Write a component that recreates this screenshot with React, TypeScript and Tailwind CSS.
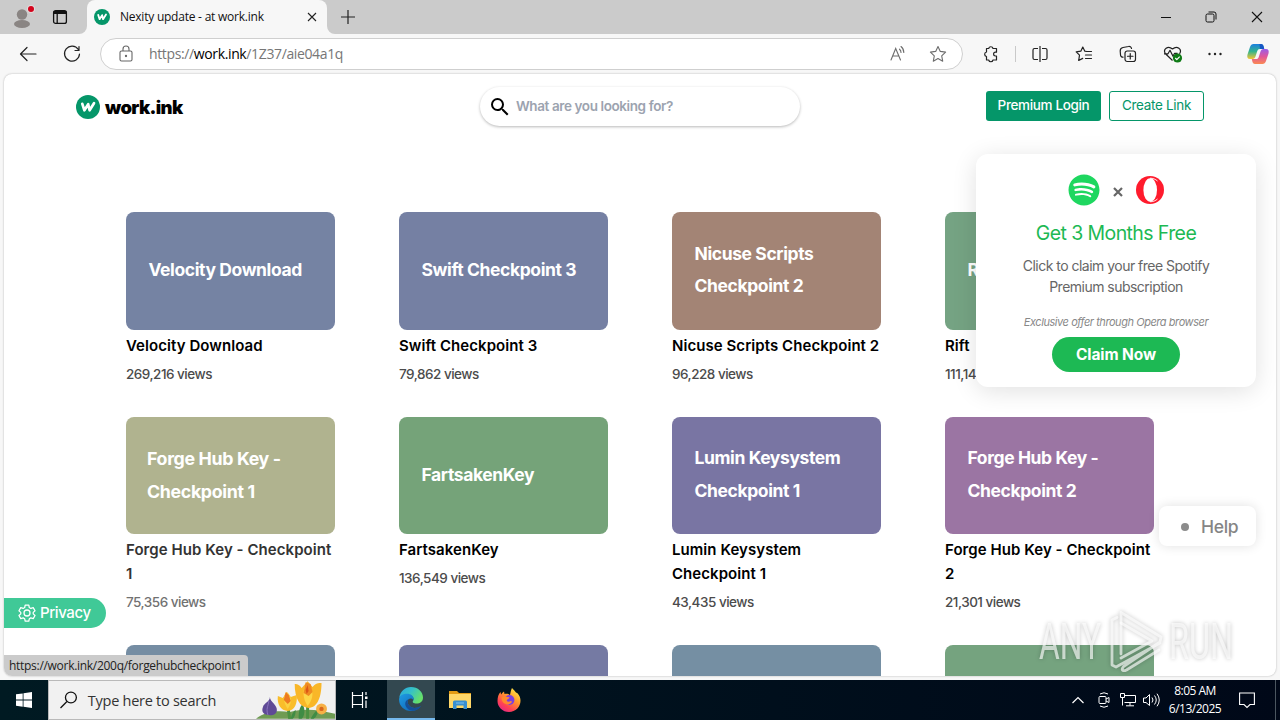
import React from "react";
import { FaSpotify } from "react-icons/fa";
import { MdSearch } from "react-icons/md";

type LinkCard = { lines: string[]; title: string; views: string; box: string; dim?: boolean };

const cards: LinkCard[] = [
  { lines: ["Velocity Download"], title: "Velocity Download", views: "269,216 views", box: "bg-[#7583a3]" },
  { lines: ["Swift Checkpoint 3"], title: "Swift Checkpoint 3", views: "79,862 views", box: "bg-[#7580a3]" },
  { lines: ["Nicuse Scripts", "Checkpoint 2"], title: "Nicuse Scripts Checkpoint 2", views: "96,228 views", box: "bg-[#a38475]" },
  { lines: ["Rift"], title: "Rift", views: "111,14", box: "bg-[#75a383]" },
  { lines: ["Forge Hub Key -", "Checkpoint 1"], title: "Forge Hub Key - Checkpoint 1", views: "75,356 views", box: "bg-[#b0b38f]", dim: true },
  { lines: ["FartsakenKey"], title: "FartsakenKey", views: "136,549 views", box: "bg-[#75a379]" },
  { lines: ["Lumin Keysystem", "Checkpoint 1"], title: "Lumin Keysystem Checkpoint 1", views: "43,435 views", box: "bg-[#7975a3]" },
  { lines: ["Forge Hub Key -", "Checkpoint 2"], title: "Forge Hub Key - Checkpoint 2", views: "21,301 views", box: "bg-[#9b75a3]" },
  { lines: [], title: "", views: "", box: "bg-[#758da3]" },
  { lines: [], title: "", views: "", box: "bg-[#757aa3]" },
  { lines: [], title: "", views: "", box: "bg-[#758fa3]" },
  { lines: [], title: "", views: "", box: "bg-[#75a37f]" },
];

function WorkMark({ className }: { className: string }) {
  return (
    <svg viewBox="0 0 24 24" className={className}>
      <circle cx="12" cy="12" r="12" fill="#059669" />
      <path d="M6.3 8.8 8.4 15.3 12.2 9.2 13.6 15.3 18 8.2" fill="none" stroke="#fff" strokeWidth="2.7" strokeLinejoin="round" strokeLinecap="round" />
    </svg>
  );
}

function TabStrip() {
  return (
    <div className="flex h-[34px] items-stretch bg-[#f7f7f7]">
      <div className="flex w-[87px] items-center rounded-br-lg bg-[#cbcbcb] pl-[12px]">
        <svg width="24" height="26" viewBox="0 0 24 26">
          <circle cx="10" cy="10.5" r="5.2" fill="#8a8583" />
          <ellipse cx="10" cy="20" rx="8" ry="4" fill="#8a8583" />
          <circle cx="19" cy="5" r="4" fill="#e3dada" />
          <circle cx="19" cy="5" r="3" fill="#d3041c" />
        </svg>
        <svg width="16" height="16" viewBox="0 0 16 16" className="ml-[16px]">
          <rect x="1.6" y="1.6" width="12.8" height="12.8" rx="2" fill="none" stroke="#111" strokeWidth="1.3" />
          <path d="M1.6 2h12.8v3H1.6z" fill="#111" />
          <path d="M5.2 4v10.400" stroke="#111" strokeWidth="1.3" />
        </svg>
      </div>
      <div className="w-[240px] bg-[#cbcbcb]">
        <div className="flex h-[34px] items-center rounded-t-lg bg-[#f7f7f7] pl-[7px]">
          <WorkMark className="size-4" />
          <span className="ml-[10px] w-[187px] whitespace-nowrap text-[12px] tracking-[-0.230px] text-[#111]">Nexity update - at work.ink</span>
          <svg width="10" height="10" viewBox="0 0 10 10"><path d="M1 1l8 8M9 1l-8 8" stroke="#222" strokeWidth="1.1" /></svg>
        </div>
      </div>
      <div className="flex flex-1 items-center rounded-bl-lg bg-[#cbcbcb] pl-[14px]">
        <svg width="14" height="14" viewBox="0 0 14 14"><path d="M7 0v14M0 7h14" stroke="#222" strokeWidth="1.2" /></svg>
      </div>
      <div className="flex items-center gap-[34px] bg-[#cbcbcb] pr-[17px]">
        <svg width="10" height="12" viewBox="0 0 10 12"><path d="M0 6.5h10" stroke="#111" /></svg>
        <svg width="12" height="12" viewBox="0 0 12 12" fill="none" stroke="#111">
          <rect x="1" y="3" width="8" height="8" rx="1.5" />
          <path d="M3.5 1H9a2 2 0 0 1 2 2v5.5" />
        </svg>
        <svg width="12" height="12" viewBox="0 0 12 12"><path d="M1 1l10 10M11 1 1 11" stroke="#111" strokeWidth="1.1" /></svg>
      </div>
    </div>
  );
}

function Toolbar() {
  return (
    <div className="flex h-[39px] items-center bg-[#f7f7f7] pl-[18px]">
      <svg width="20" height="20" viewBox="0 0 20 20" fill="none" stroke="#222" strokeWidth="1.2" strokeLinecap="round" strokeLinejoin="round">
        <path d="M18 10H2.500M9 3.500 2.500 10 9 16.500" />
      </svg>
      <svg width="20" height="20" viewBox="0 0 20 20" fill="none" stroke="#222" strokeWidth="1.2" strokeLinecap="round" strokeLinejoin="round" className="ml-[24px]">
        <path d="M16.300 5.500A7.500 7.500 0 1 0 17.500 10M17 2.500v4h-4" />
      </svg>
      <div className="ml-[18px] flex h-[32px] w-[863px] items-center rounded-full border border-[#cfcfcf] bg-white pl-[17px] pr-[15px]">
        <svg width="16" height="18" viewBox="0 0 16 18" fill="none" stroke="#666" strokeWidth="1.100">
          <rect x="2" y="6" width="12" height="10" rx="1.500" />
          <path d="M5 6V4a3 3 0 0 1 6 0v2" />
          <circle cx="8" cy="11" r=".6" fill="#666" />
        </svg>
        <span className="ml-[15px] flex-1 text-[14px] tracking-[-0.370px] text-[#767676]">https://<span className="text-black">work.ink</span>/1Z37/aie04a1q</span>
        <svg width="18" height="18" viewBox="0 0 18 18" fill="none" stroke="#6d6d6d" strokeWidth="1.100" strokeLinecap="round">
          <path d="M2 15 6.700 3.500 11.500 15M3.700 11h6" />
          <path d="M10.500 4.200c1 .8 1.500 2 1.500 3.300M12 1.500c1.800 1.400 2.800 3.500 2.800 6" />
        </svg>
        <svg width="18" height="18" viewBox="0 0 18 18" fill="none" stroke="#6d6d6d" strokeWidth="1.100" strokeLinejoin="round" className="ml-[22px]">
          <path d="M9 1.500l2.300 4.900 5.300.7-3.900 3.700 1 5.400L9 13.600l-4.700 2.600 1-5.400L1.400 7.100l5.300-.7z" />
        </svg>
      </div>
      <div className="ml-[19px] flex items-center text-[#222]">
        <svg width="18" height="18" viewBox="0 0 18 18" fill="none" stroke="currentColor" strokeWidth="1.200" strokeLinejoin="round">
          <path d="M4.500 3.500h2.200a2.200 2.200 0 0 1 4.300 0h3.500v3.700h-1a1.900 1.900 0 0 0 0 3.800h1v4H11a2.200 2.200 0 0 1-4.300 0H4.500v-3.500a2.300 2.300 0 0 1 0-4.500z" />
        </svg>
        <span className="ml-[15px] h-4 w-px bg-[#c9c9c9]" />
        <svg width="18" height="18" viewBox="0 0 18 18" fill="none" stroke="currentColor" strokeWidth="1.200" className="ml-[15px]">
          <path d="M7 3.500H3.500A1.500 1.500 0 0 0 2 5v8a1.500 1.500 0 0 0 1.500 1.500H7M11 3.500h3.500A1.500 1.500 0 0 1 16 5v8a1.500 1.500 0 0 1-1.500 1.500H11M9 1v16" />
        </svg>
        <svg width="18" height="18" viewBox="0 0 18 18" fill="none" stroke="currentColor" strokeWidth="1.200" strokeLinejoin="round" strokeLinecap="round" className="ml-[26px]">
          <path d="M11.700 6.500 9.800 6.200 7.800 2 5.800 6.200 1.200 6.900l3.300 3.300-.8 5.300 4-2.100M11.700 6.500h4.800M10.500 10h6M10.500 13.500h6" />
        </svg>
        <svg width="18" height="18" viewBox="0 0 18 18" fill="none" stroke="currentColor" strokeWidth="1.200" strokeLinecap="round" className="ml-[26px]">
          <rect x="6" y="6" width="10.500" height="10.500" rx="2.200" />
          <path d="M11.250 8.500v5.500M8.500 11.250H14M4 12.200A2.500 2.500 0 0 1 1.500 9.700L1.200 6A3.500 3.500 0 0 1 4 2.500L9.500 1.500a2.500 2.500 0 0 1 3 2" />
        </svg>
        <svg width="21" height="20" viewBox="0 0 21 20" fill="none" stroke="currentColor" strokeWidth="1.200" strokeLinejoin="round" className="ml-[26px]">
          <path d="M9.500 16.500 2.500 9.800C-.5 5.500 4.800 1 9.500 5c4.700-4 10 .5 7 4.800M1 9.800h4l2-3.500 3 6 1.600-3h3" />
          <circle cx="14.500" cy="14" r="4.600" fill="#0f7b16" stroke="none" />
          <path d="m12.300 14 1.500 1.600 2.900-3" stroke="#fff" />
        </svg>
        <svg width="16" height="4" viewBox="0 0 16 4" className="ml-[23px]" fill="currentColor">
          <circle cx="2.500" cy="2" r="1.200" /><circle cx="8" cy="2" r="1.200" /><circle cx="13.500" cy="2" r="1.200" />
        </svg>
        <svg width="24" height="22" viewBox="0 0 24 22" className="ml-[23px]">
          <defs>
            <linearGradient id="cpA" x1="0" y1="0" x2="0" y2="1"><stop offset="0" stopColor="#1b7fe0" /><stop offset=".5" stopColor="#34b58c" /><stop offset="1" stopColor="#f6c532" /></linearGradient>
            <linearGradient id="cpB" x1="0" y1="0" x2="0" y2="1"><stop offset="0" stopColor="#9a5ce8" /><stop offset=".5" stopColor="#e0569b" /><stop offset="1" stopColor="#fb8a52" /></linearGradient>
          </defs>
          <path d="M7.500 1H15c1.600 0 2.200 1 2.700 2.800L18.200 6H14c-1.600 0-2.300.8-2.900 2.600L9.500 13.500C9 15 8.200 16 6.500 16H4C1.500 16 .8 14 1.500 11.500L4 4C4.700 2 5.800 1 7.500 1z" fill="url(#cpA)" />
          <path d="M13.500 1H15c1.600 0 2.200 1 2.700 2.800L18.200 6H14z" fill="#1657c4" />
          <path d="M16.500 21H9c-1.600 0-2.200-1-2.700-2.800L5.800 16H10c1.600 0 2.300-.8 2.900-2.600L14.500 8.500C15 7 15.800 6 17.500 6H20c2.500 0 3.200 2 2.500 4.500L20 18c-.7 2-1.800 3-3.500 3z" fill="url(#cpB)" />
        </svg>
      </div>
    </div>
  );
}

function SiteHeader() {
  return (
    <header className="flex items-start pl-[72px] pr-[72px] pt-[13px]">
      <div className="flex w-[404px] items-center gap-[5px] pt-[7px]">
        <WorkMark className="size-6" />
        <span className="pt-[1px] text-[18.500px] font-black leading-6 tracking-[-0.650px] text-black">work.ink</span>
      </div>
      <div className="flex h-[39px] w-[320px] items-center rounded-full bg-white pl-[8px] shadow-[0_1px_3px_rgba(0,0,0,0.28)]">
        <MdSearch className="size-6 text-black" />
        <span className="ml-[4px] text-[13.500px] font-semibold tracking-[-0.400px] text-[#9ca3af]">What are you looking for?</span>
      </div>
      <div className="ml-auto flex gap-[8px] pt-[4px]">
        <button className="h-[30px] w-[115px] rounded-[3px] bg-[#059669] pb-[2px] text-[13.500px] font-medium tracking-[-0.350px] text-white">Premium Login</button>
        <button className="h-[30px] w-[95px] rounded-[3px] border border-[#059669] pb-[2px] text-[13.500px] tracking-[-0.300px] text-[#059669]">Create Link</button>
      </div>
    </header>
  );
}

function Card({ card }: { card: LinkCard }) {
  return (
    <article>
      <div className={"flex h-[117.5px] flex-col justify-center rounded-[8px] pb-[1px] font-bold text-white " + (card.dim ? "pl-[21px] text-[17.800px] leading-[33px] tracking-[-0.350px] " : "pl-[22.500px] text-[17.500px] leading-[32.500px] tracking-[-0.400px] ") + card.box}>
        {card.lines.map((line) => (
          <span key={line} className="whitespace-nowrap">{line}</span>
        ))}
      </div>
      <h3 className={"mt-[4px] text-[15px] font-semibold leading-6 tracking-[0.060px] " + (card.dim ? "text-[#333]" : "text-black")}>{card.title}</h3>
      <p className={"mt-[6px] text-[13.500px] font-medium leading-5 tracking-[-0.500px] " + (card.dim ? "text-[#717171]" : "text-[#4b4b4b]")}>{card.views}</p>
    </article>
  );
}

function Promo() {
  return (
    <aside className="absolute left-[972px] top-[80px] flex h-[233px] w-[280px] flex-col items-center rounded-[12px] bg-white pt-[20px] shadow-[0_4px_24px_rgba(0,0,0,0.12)]">
      <div className="flex h-8 items-center">
        <FaSpotify className="size-[32px] text-[#1ed760]" />
        <svg width="10" height="10" viewBox="0 0 10 10" className="ml-[13px] mt-[3px]"><path d="M1 1l8 8M9 1 1 9" stroke="#666" strokeWidth="2.200" /></svg>
        <svg width="28" height="28" viewBox="0 0 28 28" className="ml-[13px]">
          <circle cx="14" cy="14" r="14" fill="#ff1b2d" />
          <ellipse cx="14.200" cy="14" rx="6.800" ry="11.800" fill="#fff" />
          <path d="M14 2.200c3 0 5.500 1 7.500 2.800" fill="none" stroke="#fff" strokeWidth=".9" />
          <path d="M14 25.800c3 0 5.500-1 7.500-2.800" fill="none" stroke="#fff" strokeWidth=".9" />
        </svg>
      </div>
      <h2 className="mt-[13px] text-[19.500px] leading-7 tracking-[-0.600px] text-[#1db954]">Get 3 Months Free</h2>
      <p className="mt-[8px] w-[220px] text-center text-[14px] leading-[21px] tracking-[-0.520px] text-[#666]">Click to claim your free Spotify Premium subscription</p>
      <p className="mt-[17px] whitespace-nowrap text-[11px] italic leading-4 tracking-[-0.440px] text-[#888]">Exclusive offer through Opera browser</p>
      <button className="mt-[7px] h-[35px] w-[128px] rounded-full bg-[#1db954] text-[15.500px] font-bold tracking-[-0.100px] text-white">Claim Now</button>
    </aside>
  );
}

function Watermark() {
  return (
    <svg width="208" height="70" viewBox="0 0 208 70" className="absolute left-[1032px] top-[534px] drop-shadow-[0_0_2px_rgba(0,0,0,0.35)]" fill="none">
      <g fill="#fff" fillOpacity=".65" fontFamily="Roboto, sans-serif" fontSize="50" fontWeight="400">
        <text x="3" y="51" textLength="62" lengthAdjust="spacingAndGlyphs">ANY</text>
        <text x="133" y="51" textLength="64" lengthAdjust="spacingAndGlyphs">RUN</text>
      </g>
      <g stroke="#fff" strokeOpacity=".65" strokeWidth="2.800" strokeLinejoin="round" strokeLinecap="round">
        <path d="M81 9.500 76 12V57l4 2 44-24M85 46V4.500l40 24.500-1 5L87.500 58.500c-3 4 0 5 3 3.500L123 42" />
        <path d="M85 15 116 33 85 50" />
      </g>
    </svg>
  );
}

function SitePage() {
  return (
    <main className="relative mx-[4px] mt-px h-[602px] overflow-hidden rounded-[8px] bg-white font-['Inter',sans-serif] shadow-[0_0_2px_rgba(0,0,0,0.3)]">
      <SiteHeader />
      <div className="ml-[122px] mt-[86px] grid w-[1028px] grid-cols-[repeat(4,209px)] gap-x-[64px] gap-y-[33px]">
        {cards.map((card, i) => (
          <Card key={i} card={card} />
        ))}
      </div>
      <Promo />
      <div className="absolute left-[1155px] top-[432px] flex h-[40px] w-[97px] items-center rounded-[8px] bg-white pl-[22px] shadow-[0_0_12px_rgba(0,0,0,0.12)]">
        <span className="mt-[2px] size-2 rounded-full bg-[#8c8c8c]" />
        <span className="ml-[12px] pt-[2px] text-[17.500px] font-medium tracking-[-0.300px] text-[#858585]">Help</span>
      </div>
      <div className="absolute left-0 top-[524px] flex h-[30px] w-[102px] items-center rounded-r-full bg-[#40c997] pl-[14px] text-white">
        <svg width="18" height="18" viewBox="0 0 24 24" fill="none" stroke="currentColor" strokeWidth="1.700" strokeLinejoin="round">
          <path d="M9.600 1.500h4.800l.7 3.200 2 1.200 3.200-1 2.400 4.100-2.400 2.200v2l2.400 2.200-2.400 4.100-3.200-1-2 1.200-.7 3.200H9.600l-.7-3.200-2-1.200-3.200 1-2.400-4.100 2.400-2.200v-2L1.300 9l2.400-4.100 3.200 1 2-1.200z" />
          <circle cx="12" cy="12" r="4" />
        </svg>
        <span className="ml-[4px] text-[15px] font-medium tracking-[-0.400px]">Privacy</span>
      </div>
      <div className="absolute bottom-0 left-0 h-[21px] w-[244px] rounded-tr-[4px] bg-[#cbcbcb] pl-[5px] font-['Open_Sans',sans-serif] text-[12px] leading-[21px] tracking-[-0.290px] text-[#222]">https://work.ink/200q/forgehubcheckpoint1</div>
      <Watermark />
    </main>
  );
}

function Flowers() {
  return (
    <svg width="80" height="39" viewBox="0 0 80 39">
      <path d="M0 39c8-7 20-9 34-7 16-4 30-2 46 2v5z" fill="#6f9b53" />
      <path d="M14 17c0 5 8 8 7 14-1 4-5 5-8 4-5 0-8-3-6-8 1-4 7-5 7-10z" fill="#5f4a96" />
      <path d="M13 21c-1 6-3 8-1 14" stroke="#8a74bd" fill="none" />
      <path d="M34 39l-2-13M52 39V22" stroke="#4c9141" strokeWidth="3" />
      <path d="M43 39c0-8 1-12 4-15 3 6 2 12-1 15zM55 39c4-7 6-9 8-10-1 5-2 8-5 10zM35 39c1-5 3-8 5-9 0 4-1 7-3 9z" fill="#3f8c45" />
      <path d="M22 16l5 2 4-6 4 5 6-2c1 8-2 16-9 16s-11-7-10-15z" fill="#f9bd2a" />
      <path d="M31 12c-4 3-4 10 1 17 5-7 4-13-1-17z" fill="#fbd142" />
      <path d="M30 12l3 3 2 6-3 3-4-4z" fill="#ed7a22" />
      <path d="M39 4c3-1 6 2 7 4l6-7 5 6c3-4 6-4 9-4 0 14-4 25-13 25S39 18 39 4z" fill="#f9b728" />
      <path d="M52 3c-6 6-5 16 0 23 6-7 7-16 0-23z" fill="#fdd647" />
      <path d="M50 2l5 2 2 8-4 4-5-3z" fill="#ef8a22" />
      <path d="M52 5l1 6-2 3-1-4z" fill="#db5716" />
      <circle cx="66" cy="29" r="5.500" fill="#f6b046" /><circle cx="66" cy="29" r="2.200" fill="#d9661c" />
    </svg>
  );
}

function EdgeLogo() {
  return (
    <svg width="24" height="24" viewBox="0 0 24 24">
      <defs>
        <linearGradient id="edA" x1="0" y1="0" x2="1" y2=".5"><stop offset="0" stopColor="#2aa5df" /><stop offset=".5" stopColor="#35c1c8" /><stop offset="1" stopColor="#66e06a" /></linearGradient>
        <linearGradient id="edB" x1="0" y1="0" x2="1" y2="1"><stop offset="0" stopColor="#1f9ce4" /><stop offset="1" stopColor="#0d5dae" /></linearGradient>
      </defs>
      <path d="M.3 10.500C1.300 4.500 6 0 12 0c7 0 12 5 12 10.500 0 4-3 6-6.500 6-3 0-4.500-1.300-3.500-2.500 2-3-1-6-5-6-4 0-7.500 1.500-8.700 2.500z" fill="url(#edA)" />
      <path d="M.1 12C.5 8.500 4 6.800 8 6.800c4.500 0 7.500 3 6.500 6.500-1-2-3.500-2.500-5-1-2.500 3 .5 8.500 6 8.700 2.700 0 4.700-1 6.500-2C20 22 16 24 12 24 5 24-.3 18.500.1 12z" fill="url(#edB)" />
      <path d="M9.500 12.300c-2.500 3 .5 8.500 6 8.700 2.700 0 4.700-1 6.500-2C19 24 12 25 9 22c-4-3-3.500-8.500.5-9.700z" fill="#164f97" />
    </svg>
  );
}

function FirefoxLogo() {
  return (
    <svg width="24" height="24" viewBox="0 0 24 24">
      <defs>
        <linearGradient id="ffA" x1=".85" y1="0" x2=".2" y2="1"><stop offset="0" stopColor="#fff14a" /><stop offset=".4" stopColor="#ff9a2b" /><stop offset=".75" stopColor="#ff4055" /><stop offset="1" stopColor="#e0268a" /></linearGradient>
      </defs>
      <path d="M15 0c1.500 1.800 3 3 4 4.500l1.500.8c2 2.200 3 4.700 3 7.500C23.500 19 18.500 24 12 24S.5 19 .5 13c0-4 1-7 3-9l.6 2.500C5 5 6 4 7 3.500l.5 2.500c2.500-.5 4 0 5.500 1C13.500 4.500 14 2 15 0z" fill="url(#ffA)" />
      <circle cx="12.500" cy="12" r="4.900" fill="#7a3fe0" />
      <path d="M4.500 9.500c2-2 4-1.500 5.500-.5l2.500.3c0 1.500-2.500 1.800-2.800 3.200.5 1.500 2.500 1.500 4 .5 2 0 1.500 2-1.700 3.200-4 1-7.500-2.200-7.500-6.700z" fill="#ff8a2c" />
    </svg>
  );
}

function Taskbar() {
  return (
    <footer className="flex h-[40px] items-stretch bg-gradient-to-r from-[#001a22] to-[#000818] font-['Open_Sans',sans-serif]">
      <div className="flex w-[48px] items-center justify-center">
        <svg width="16" height="16" viewBox="0 0 16 16" fill="#fff"><path d="M0 2.300 6.700 1.400v6.200H0zM7.500 1.300 16 0v7.600H7.500zM0 8.400h6.700v6.300L0 13.700zM7.500 8.400H16V16l-8.500-1.200z" /></svg>
      </div>
      <div className="flex w-[288px] items-end overflow-hidden border border-[#b9b9b9] bg-[#f1f1f1] pl-[11px]">
        <svg width="18" height="18" viewBox="0 0 18 18" fill="none" stroke="#111" strokeWidth="1.300" className="mb-[10px]"><circle cx="11" cy="6.500" r="5.500" /><path d="m7 10.500-6.500 6.500" /></svg>
        <span className="ml-[10px] w-[169px] whitespace-nowrap pb-[7px] text-[14.500px] leading-[22px] tracking-[-0.270px] text-[#333]">Type here to search</span>
        <Flowers />
      </div>
      <div className="flex w-[48px] items-center justify-center">
        <svg width="18" height="16" viewBox="0 0 18 16" fill="none" stroke="#fff" strokeWidth="1.200"><path d="M1.500 0v3.500h10V0M1.500 16v-3.500h10V16M1.500 3.500v9M11.500 3.500v9M15 0v3M15 8.500V16" /><path d="M14 4.500h2.500V7H14z" fill="#fff" stroke="none" /></svg>
      </div>
      <div className="ml-[3px] flex w-[48px] items-center justify-center border-b-2 border-[#76b9ed] bg-[#334850]"><EdgeLogo /></div>
      <div className="flex w-[49px] items-center justify-center">
        <svg width="22" height="20" viewBox="0 0 22 20">
          <path d="M0 1h8l2 2h12v5H0z" fill="#e39b14" /><path d="M0 4h22v14H0z" fill="#ffd768" />
          <path d="M4 19v-7q0-1.500 1.500-1.500h11q1.500 0 1.500 1.500v7h-3.500v-3.500h-7V19z" fill="#3a8fd0" />
          <path d="M7 13h8" stroke="#7fc0ee" />
        </svg>
      </div>
      <div className="flex w-[49px] items-center justify-center"><FirefoxLogo /></div>
      <div className="ml-auto flex items-center text-white">
        <svg width="12" height="8" viewBox="0 0 12 8" fill="none" stroke="#fff" strokeWidth="1.200"><path d="M.5 7 6 1.500 11.500 7" /></svg>
        <svg width="12" height="16" viewBox="0 0 12 16" fill="none" stroke="#fff" className="ml-[14px]"><rect x="1" y="4.500" width="7" height="7" rx="1" /><path d="M8 7l3-1.500v5L8 9M2 2q4-2.500 8 0M2 14q4 2.500 8 0" /></svg>
        <svg width="16" height="14" viewBox="0 0 16 14" fill="none" stroke="#fff" className="ml-[10px]"><path d="M5 2.500h10.500v7H4.500M.5.500h4v4h-4zM2.500 4.500v8M10 9.500v3M6 12.800h8" /></svg>
        <svg width="17" height="14" viewBox="0 0 17 14" fill="none" stroke="#fff" className="ml-[7px]"><path d="M.5 5v4.500H3l3.500 3v-11L3 5zM9 4.500q2 2.500 0 5M11.500 2.500q3.500 4.500 0 9M14 .7q4.500 6.300 0 12.600" /></svg>
        <div className="ml-[7px] w-[56px] text-center text-[12px] leading-[18px] tracking-[-0.500px]"><div>8:05 AM</div><div>6/13/2025</div></div>
        <svg width="16" height="17" viewBox="0 0 16 17" fill="none" stroke="#fff" strokeWidth="1.100" className="ml-[16px]"><path d="M.6 1h14.800v11.500H11L8 15.500l-3-3H.6z" /></svg>
        <span className="ml-[20px] h-[40px] w-px bg-[#4b5660]" />
        <span className="w-[4px]" />
      </div>
    </footer>
  );
}

export default function App() {
  return (
    <div className="flex h-[720px] w-[1280px] flex-col overflow-hidden bg-[#f7f7f7] font-['Open_Sans',sans-serif]">
      <TabStrip />
      <Toolbar />
      <SitePage />
      <div className="mt-auto"><Taskbar /></div>
    </div>
  );
}
